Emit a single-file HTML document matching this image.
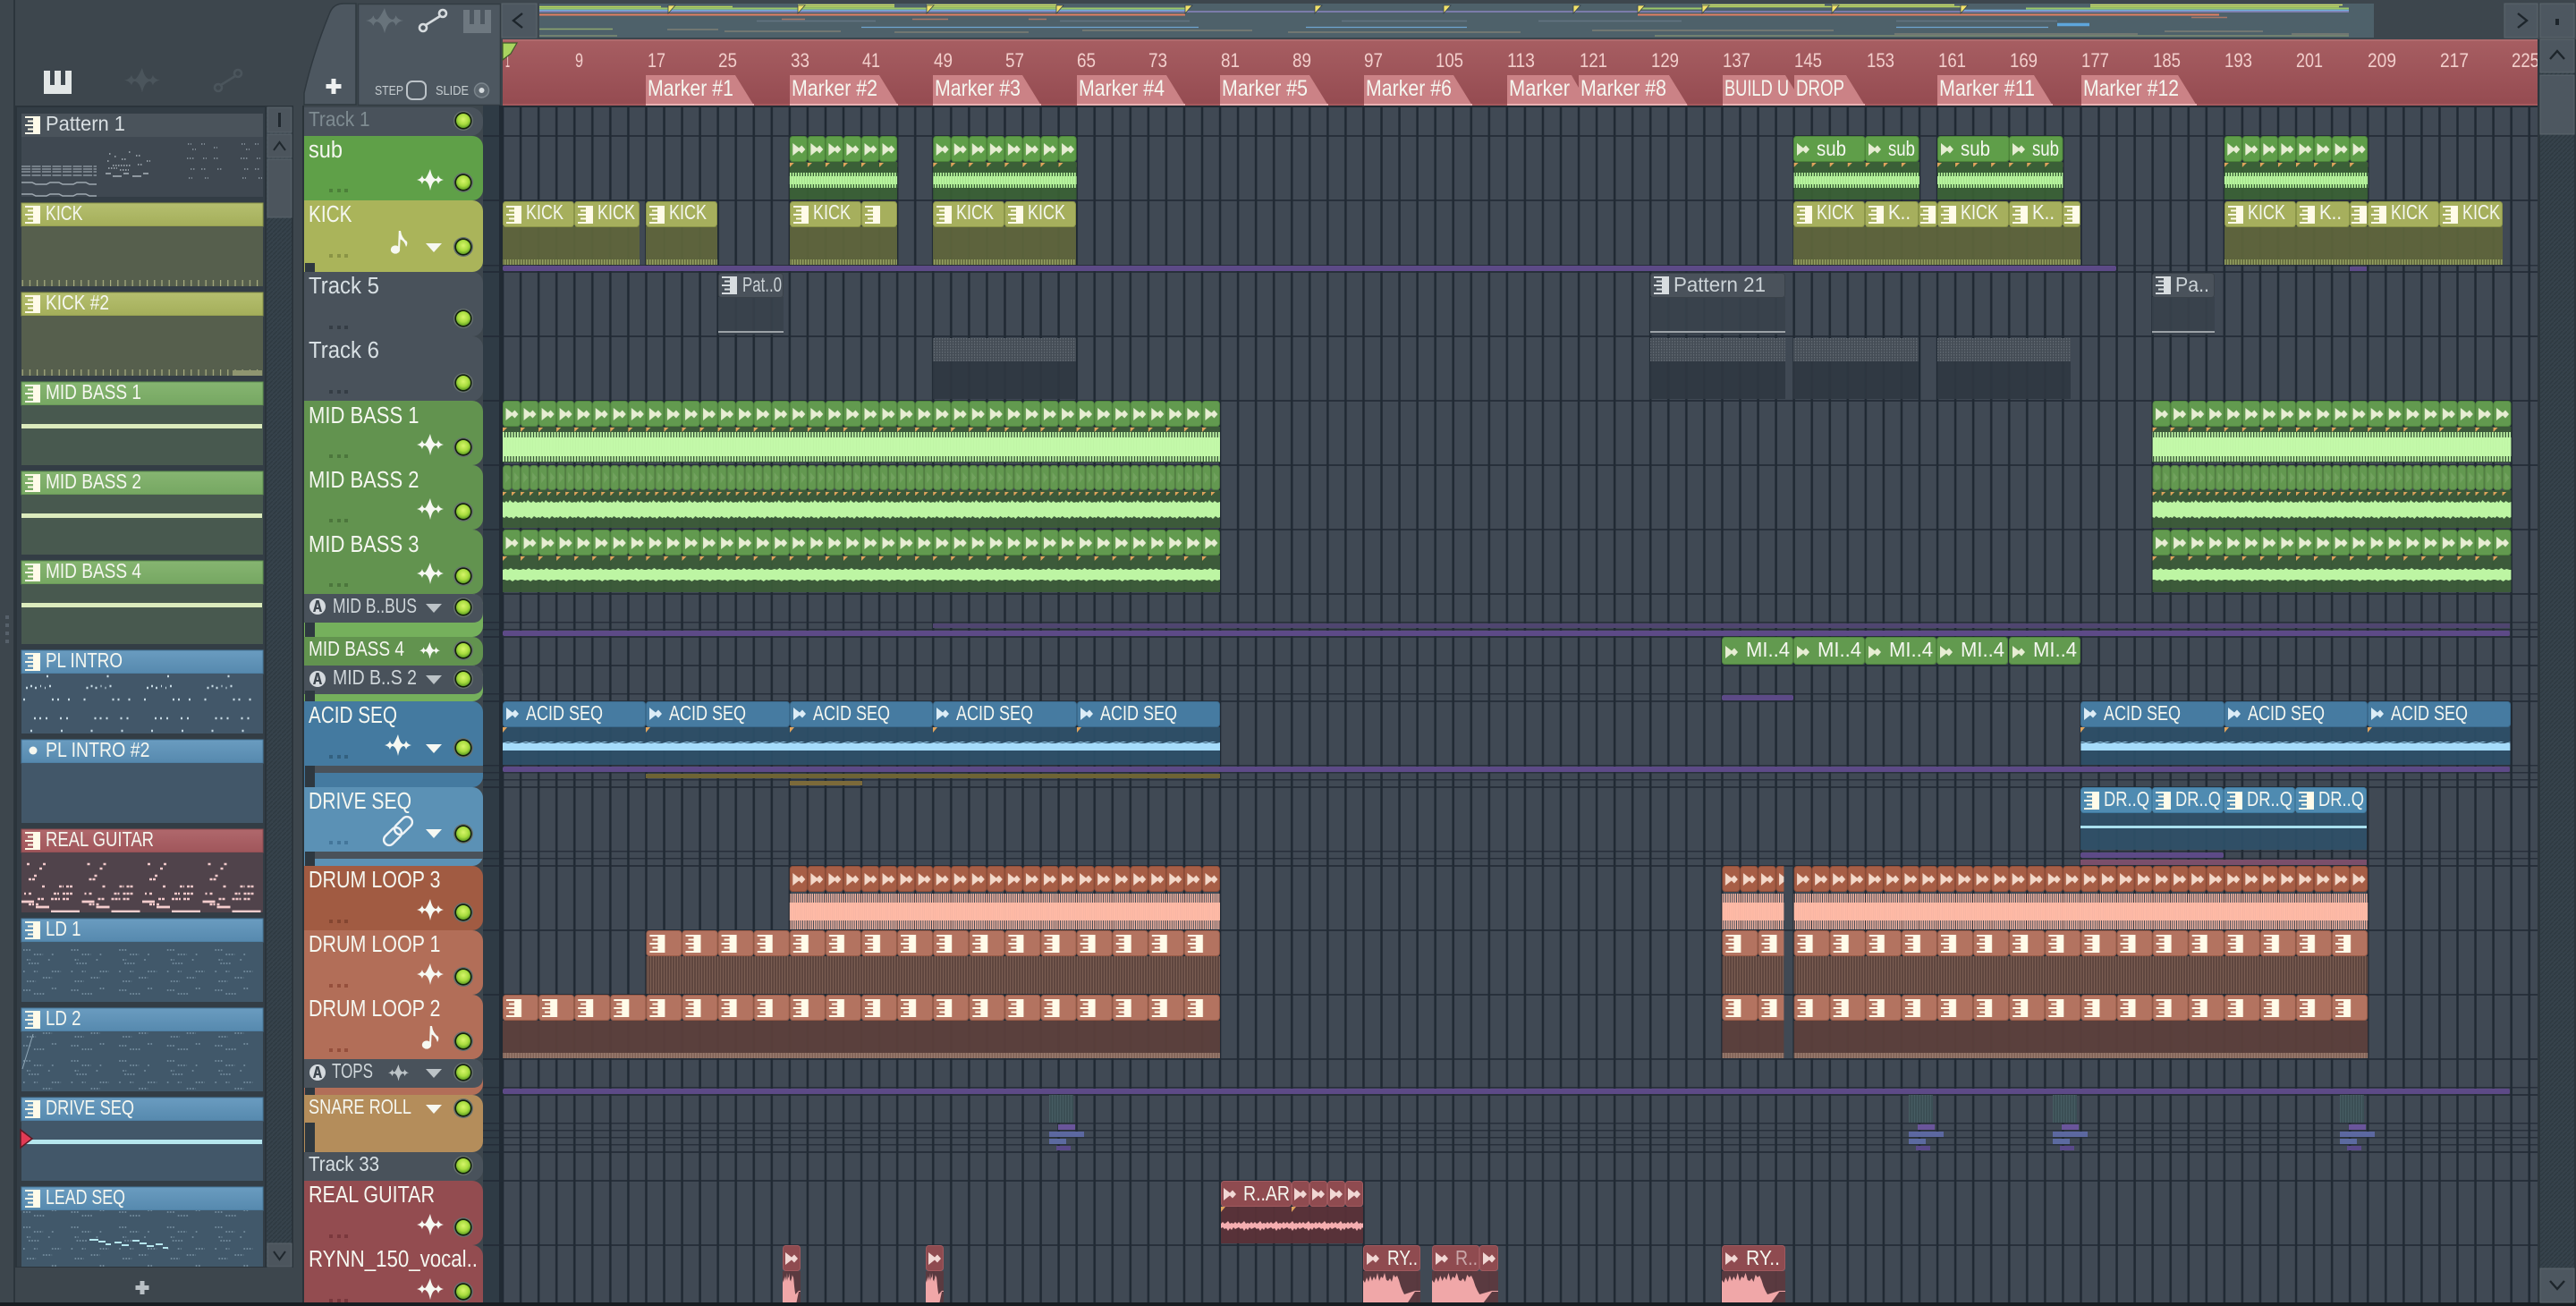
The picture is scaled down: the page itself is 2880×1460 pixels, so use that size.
<!DOCTYPE html>
<html><head><meta charset="utf-8"><title>Playlist</title>
<style>
html,body{margin:0;padding:0;background:#3c454c;width:2880px;height:1460px;overflow:hidden}
svg{display:block}
text{font-family:"Liberation Sans",sans-serif;fill:#f5f7f0;font-size:23px}
.n{font-size:25.5px}.p{font-size:23px}.r{font-size:22px;fill:#f3cfcc}.m{font-size:25px}.s{font-size:14.5px;fill:#c5ccd0}
.kh{fill:#a6af5d;stroke:#8b9549}.gh{fill:#629a4f;stroke:#4f843e}.bh{fill:#467ba1;stroke:#3a6a8d}.dh{fill:#4f8bb1;stroke:#3f7a9f}.rh{fill:#8f4b50;stroke:#a0595e}.sh{fill:#5f9e49;stroke:#4c8439}.th{fill:#4a525b;stroke:#3a424a}
.ic{fill:#fffbe9}.bw{fill:#e6edd2}
</style></head><body>
<svg xmlns="http://www.w3.org/2000/svg" width="2880" height="1460" viewBox="0 0 2880 1460">
<defs>
<path id="bow" d="M0 0L7 5.500 10 2.500 14 7 10 11.500 7 8.500 0 14Z"/>
<path id="pno" d="M0 0H17V20H0V18H9V15.500H3V13.500H9V11H0V9H9V6.500H3V4.500H9V2H0Z"/>
<path id="piano" fill-rule="evenodd" d="M0 0H31V26H0ZM7 0H12V16H7ZM19 0H24V16H19Z"/>
<path id="wav" d="M0,12 Q5,11 6,7 Q7,11 9,11 Q11,10 15,0 Q17,10 21,11 Q23,11 24,7 Q25,11 30,12 Q25,13 24,17 Q23,13 21,13 Q17,14 15,24 Q13,14 9,13 Q7,13 6,17 Q5,13 0,12Z"/>
<path id="tri" d="M0 0H18L9 10Z"/>
<path id="voc" d="M0 1443V1431l2 3 2-6 2 5 2-7 2 6 2-5 2 4 2-8 2 9 2-5 2 2 2-6 2 8 2 1 2-3 2 4 2-8 2 3 2-2 2 5 2 7 2 5 2 4L58 1443H64V1444H58L50 1456H0Z"/>
<g id="lnk" fill="none" stroke-width="2.600"><circle cx="5" cy="21" r="4"/><circle cx="27" cy="5" r="4"/><path d="M8 18L24 8"/></g>
<radialGradient id="lg" cx=".5" cy=".4" r=".6"><stop offset="0" stop-color="#d6f56a"/><stop offset=".6" stop-color="#a8dc3e"/><stop offset="1" stop-color="#5f9f22"/></radialGradient>
<g id="led"><circle r="11" fill="#66706f"/><circle r="9.600" fill="#12200c"/><circle r="8" fill="url(#lg)"/></g>
<g id="aa"><circle r="9" fill="#d5dade"/><path d="M-5 6L-1.500-7H1.500L5 6H2.500L1.600 3H-1.600L-2.500 6ZM-1 1H1L0-4Z" fill="#3c454d"/></g>
<g id="dots"><rect width="4" height="4"/><rect x="9" width="4" height="4"/><rect x="17" width="4" height="4"/></g>
<g id="note"><ellipse cx="5" cy="21" rx="5.200" ry="4.600"/><path d="M8 21L8.800 0H11Q12 8 18 12Q19 15 17 18Q15 11 10.600 9.500L10 21Z"/></g>
<g id="sn"><rect x="0" y="1224" width="27" height="31" fill="url(#snp)"/><rect x="10" y="1257" width="19" height="6" fill="#6a559b"/><rect y="1265" width="39" height="6" fill="#5c68a0"/><rect y="1273" width="19" height="6" fill="#5c6aa0"/><rect x="8" y="1281" width="16" height="5" fill="#5a4a8a"/></g>
<linearGradient id="rul" x1="0" y1="0" x2="0" y2="1"><stop offset="0" stop-color="#a75e62"/><stop offset="1" stop-color="#954b51"/></linearGradient>
<linearGradient id="hk" x1="0" y1="0" x2="0" y2="1"><stop offset="0" stop-color="#b5bf6f"/><stop offset="1" stop-color="#a4ae5a"/></linearGradient>
<linearGradient id="hg" x1="0" y1="0" x2="0" y2="1"><stop offset="0" stop-color="#86b571"/><stop offset="1" stop-color="#76a762"/></linearGradient>
<linearGradient id="hb" x1="0" y1="0" x2="0" y2="1"><stop offset="0" stop-color="#6a9cc0"/><stop offset="1" stop-color="#5689ae"/></linearGradient>
<linearGradient id="hr" x1="0" y1="0" x2="0" y2="1"><stop offset="0" stop-color="#b0686c"/><stop offset="1" stop-color="#a0565b"/></linearGradient>
<pattern id="grid" x="562" y="0" width="20.05" height="4" patternUnits="userSpaceOnUse"><rect width="20.05" height="4" fill="#404954"/><rect width="1.300" height="4" fill="#202933"/><rect x="18.850" width="1.200" height="4" fill="#202933"/></pattern>
<pattern id="hatch" width="5" height="5" patternUnits="userSpaceOnUse"><rect width="5" height="5" fill="#36424b"/><path d="M0 5L5 0" stroke="#2e3941" stroke-width="1.400"/></pattern>
<pattern id="snp" width="3" height="4" patternUnits="userSpaceOnUse"><rect width="3" height="4" fill="#3b4f55"/><rect width="1" height="4" fill="#465c62"/></pattern>
<pattern id="h20s" width="20.05" height="29" patternUnits="userSpaceOnUse"><rect x=".5" y=".5" width="19" height="28" rx="3" class="sh"/><use href="#bow" x="3.500" y="8" class="bw"/></pattern>
<pattern id="h20g" width="20.05" height="29" patternUnits="userSpaceOnUse"><rect x=".5" y=".5" width="19" height="28" rx="3" class="gh"/><use href="#bow" x="3.500" y="8" class="bw"/></pattern>
<pattern id="h10g" width="10.025" height="28" patternUnits="userSpaceOnUse"><rect x=".5" y=".5" width="9" height="27" rx="3" fill="#639850" stroke="#527f42"/><path d="M3 8L8 14 3 20Z" fill="#72a25f"/></pattern>
<pattern id="h20d" width="20.05" height="29" patternUnits="userSpaceOnUse"><rect x=".5" y=".5" width="19" height="28" rx="3" fill="#a75e46" stroke="#8e4d38"/><use href="#bow" x="3.500" y="8" fill="#f3d8c9"/></pattern>
<pattern id="h40d" width="40.1" height="29" patternUnits="userSpaceOnUse"><rect x=".5" y=".5" width="39" height="28" rx="3" fill="#b37360" stroke="#9a5c48"/><use href="#pno" x="4" y="5" class="ic"/></pattern>
<pattern id="f20" width="20.05" height="5" patternUnits="userSpaceOnUse"><path d="M0 0H5L0 5Z" fill="#e0a35c"/></pattern>
<pattern id="f10" width="10.025" height="5" patternUnits="userSpaceOnUse"><path d="M0 0H4.500L0 4.500Z" fill="#e0a35c"/></pattern>
<pattern id="wsub" width="3" height="17" patternUnits="userSpaceOnUse"><rect width="1.700" height="17" fill="#b6f49c"/><rect x="1.700" y="4" width="1.300" height="9" fill="#b6f49c"/></pattern>
<pattern id="wm1" width="3.200" height="33" patternUnits="userSpaceOnUse"><rect width="1.800" height="33" fill="#c3f9a9"/><rect x="1.800" y="6" width="1.400" height="21" fill="#c3f9a9"/></pattern>
<pattern id="wm2" width="20.05" height="21" patternUnits="userSpaceOnUse"><path d="M0 2L2 3 4 1 6 3 8 0 10 2 12 3 14 1 17 3 20.05 2V19L18 20 15 18 12 21 10 19 7 20 4 18 2 20 0 19Z" fill="#bdf5a3"/></pattern>
<pattern id="wm3" width="20.05" height="15" patternUnits="userSpaceOnUse"><path d="M0 2L3 1 6 2 9 0 12 2 15 1 18 2 20.05 2V13L17 14 14 13 11 15 8 13 5 14 2 13 0 13Z" fill="#bdf5a3"/></pattern>
<pattern id="wac" width="20" height="10" patternUnits="userSpaceOnUse"><path d="M0 1L4 0 8 1 12 0 16 1 20 1V9L16 10 12 9 8 10 4 9 0 9Z" fill="#a6dcfb"/></pattern>
<pattern id="wrg" width="18" height="11" patternUnits="userSpaceOnUse"><path d="M0 3L2 1 4 3 6 2 8 0 10 3 12 2 14 3 16 1 18 3V8L16 9 14 7 12 10 10 8 8 11 6 8 4 9 2 7 0 8Z" fill="#f5aeb0"/></pattern>
<pattern id="wd3" width="2.400" height="40" patternUnits="userSpaceOnUse"><rect width="1.400" height="40" fill="#ffbaa6"/><rect x="1.400" y="10" width="1" height="20" fill="#ffbaa6"/></pattern>
<pattern id="bd1" width="3" height="4" patternUnits="userSpaceOnUse"><rect width="3" height="4" fill="#5f463f"/><rect width="1" height="4" fill="#7a5d52"/></pattern>
<pattern id="tk" width="3" height="6" patternUnits="userSpaceOnUse"><rect width="3" height="6" fill="#5f663c"/><rect width="1.500" height="6" fill="#939f60"/></pattern>
<pattern id="td" width="3" height="6" patternUnits="userSpaceOnUse"><rect width="3" height="6" fill="#7f6156"/><rect width="1.500" height="6" fill="#97796c"/></pattern>
<pattern id="t6" width="3" height="3" patternUnits="userSpaceOnUse"><rect width="3" height="3" fill="#454d56"/><rect width="1.200" height="1.600" fill="#636b73"/></pattern>
<pattern id="kt" width="8.200" height="7" patternUnits="userSpaceOnUse"><rect x="0" width="1.200" height="7" fill="#a9ae80"/></pattern>
<pattern id="pi" x="24" y="752" width="67.5" height="68" patternUnits="userSpaceOnUse"><path d="M28 4h2M5 17h2M10 15h2M15 17h2M21 15h1M26 17h1M31 15h2M2 30h2M34 30h2M40 30h2M52 30h2M14 51h2M20 51h2M27 51h2M43 51h2M50 51h2M10 65h2M44 65h2" stroke="#c5d8e2" stroke-width="2.400"/></pattern>
<pattern id="pg" x="24" y="953" width="67.5" height="67" patternUnits="userSpaceOnUse"><path d="M6 13h4M24 13h4M14 26h4M20 18h3M8 30h8M23 38h4M42 38h5M50 38h8M3 46h2M8 46h3M36 46h6M46 46h11M18 52h8M33 52h10M46 52h8M8 58h6M16 58h4" stroke="#f1c8c9" stroke-width="2.400" stroke-dasharray="3 1"/><path d="M0 55h14M16 61h15M33 66h32" stroke="#f4cdcd" stroke-width="2.800"/></pattern>
<pattern id="pl" x="24" y="1053" width="53.6" height="62" patternUnits="userSpaceOnUse"><path d="M2 9h8M14 14h10M30 20h2M6 20h4M34 14h2M8 24h12M34 33h10M2 33h3M14 33h4M24 40h10M6 44h10M2 54h8M14 58h12M34 52h6" stroke="#7f98a9" stroke-width="1.600" stroke-dasharray="1.600 1.600"/></pattern>
<pattern id="p1a" x="24" y="184" width="84" height="36" patternUnits="userSpaceOnUse"><path d="M0 2H84M0 5H84M0 8H84M0 12H84" stroke="#98a2aa" stroke-width="1.200" stroke-dasharray="10 1.500"/><path d="M0 20H12L16 22H28L32 20H42L46 22H58L62 20H72L76 22H84M0 33H12L16 35H28L32 33H42L46 35H58L62 33H72L76 35H84" stroke="#9ea8b0" stroke-width="1.400" fill="none"/></pattern>
<pattern id="p1b" x="118" y="160" width="90" height="60" patternUnits="userSpaceOnUse"><path d="M4 12h2M10 15h2M18 18h5M2 20h3M26 10h3M34 14h6M46 20h4M8 25h20M3 28h10M36 24h5M16 30h10" stroke="#aab3ba" stroke-width="1.500" stroke-dasharray="1.500 1.500"/><path d="M0 34h6M8 37h10M20 34h6M30 37h10M42 34h6" stroke="#aab3ba" stroke-width="1.600"/></pattern>
<pattern id="p1c" x="205" y="155" width="60" height="50" patternUnits="userSpaceOnUse"><path d="M5 6h4M20 6h4M10 12h4M34 10h4M4 22h8M22 22h4M34 22h6M8 34h6M20 34h6M38 34h5M6 44h4M24 44h4" stroke="#8e99a2" stroke-width="1.400" stroke-dasharray="1.400 1.600"/></pattern>
<clipPath id="cl"><rect x="340" y="118" width="205" height="1338"/></clipPath>
<clipPath id="cg"><rect x="562" y="120" width="2275" height="1336"/></clipPath>
<clipPath id="cr"><rect x="562" y="44" width="2275" height="76"/></clipPath>
</defs>

<!-- page base -->
<rect width="2880" height="1460" fill="#3d464d"/>
<rect y="1456" width="2880" height="4" fill="#181d22"/>
<rect x="15" width="2" height="1456" fill="#2c353c"/>
<rect x="338" y="118" width="2" height="1338" fill="#2a3339"/>
<g fill="#56606a"><rect x="6" y="688" width="4" height="4"/><rect x="6" y="697" width="4" height="4"/><rect x="6" y="706" width="4" height="4"/><rect x="6" y="715" width="4" height="4"/></g>

<!-- picker top icons -->
<use href="#piano" x="49" y="79" fill="#e2e6e6"/>
<use href="#wav" transform="translate(139,76) scale(1.33,1.14)" fill="#4b555c"/>
<use href="#lnk" transform="translate(239,77)" stroke="#4b555c"/>

<!-- picker panel -->
<rect x="17" y="118" width="311" height="1299" fill="#2b343b"/>
<rect x="19" y="120" width="277" height="1296" fill="#333d45"/>
<rect x="298" y="120" width="28" height="1296" fill="url(#hatch)"/>
<rect x="299" y="120" width="27" height="28" fill="#4c555d" stroke="#5a646b"/>
<rect x="311" y="126" width="3" height="16" fill="#20282e"/>
<rect x="299" y="150" width="27" height="26" fill="#4c555d" stroke="#5a646b"/>
<path d="M306 168L312.500 159 319 168" fill="none" stroke="#20282e" stroke-width="2"/>
<rect x="299" y="178" width="27" height="65" fill="#4c555d" stroke="#58626a"/>
<rect x="299" y="1390" width="27" height="26" fill="#4c555d" stroke="#5a646b"/>
<path d="M306 1399L312.500 1408 319 1399" fill="none" stroke="#20282e" stroke-width="2"/>

<!-- picker items -->
<rect x="24" y="127" width="270" height="26" fill="#4a535b"/><rect x="24" y="153" width="270" height="67" fill="#3f4851"/>
<rect x="24" y="184" width="84" height="36" fill="url(#p1a)"/><rect x="118" y="160" width="90" height="60" fill="url(#p1b)"/><rect x="205" y="155" width="89" height="50" fill="url(#p1c)"/>
<rect x="24" y="227" width="270" height="26" fill="url(#hk)" stroke="#8b9549"/><rect x="24" y="253" width="270" height="67" fill="#565f4d"/><rect x="24" y="313" width="270" height="7" fill="url(#kt)"/>
<rect x="24" y="327" width="270" height="26" fill="url(#hk)" stroke="#8b9549"/><rect x="24" y="353" width="270" height="67" fill="#565f4d"/><rect x="24" y="413" width="270" height="7" fill="url(#kt)"/><rect x="260" y="414" width="33" height="6" fill="#8f9570"/>
<rect x="24" y="427" width="270" height="26" fill="url(#hg)" stroke="#5f9150"/><rect x="24" y="453" width="270" height="67" fill="#48594f"/><rect x="24" y="474" width="269" height="5" fill="#dcebbd"/>
<rect x="24" y="527" width="270" height="26" fill="url(#hg)" stroke="#5f9150"/><rect x="24" y="553" width="270" height="67" fill="#48594f"/><rect x="24" y="574" width="269" height="5" fill="#dcebbd"/>
<rect x="24" y="627" width="270" height="26" fill="url(#hg)" stroke="#5f9150"/><rect x="24" y="653" width="270" height="67" fill="#48594f"/><rect x="24" y="674" width="269" height="5" fill="#dcebbd"/>
<rect x="24" y="727" width="270" height="26" fill="url(#hb)" stroke="#47789c"/><rect x="24" y="753" width="270" height="67" fill="#425769"/><rect x="24" y="753" width="270" height="67" fill="url(#pi)"/>
<rect x="24" y="827" width="270" height="26" fill="url(#hb)" stroke="#47789c"/><rect x="24" y="853" width="270" height="67" fill="#425769"/>
<rect x="24" y="927" width="270" height="26" fill="url(#hr)" stroke="#8c4a50"/><rect x="24" y="953" width="270" height="67" fill="#50434b"/><rect x="24" y="953" width="270" height="67" fill="url(#pg)"/>
<rect x="24" y="1027" width="270" height="26" fill="url(#hb)" stroke="#47789c"/><rect x="24" y="1053" width="270" height="67" fill="#41586a"/><rect x="24" y="1053" width="270" height="67" fill="url(#pl)"/>
<rect x="24" y="1127" width="270" height="26" fill="url(#hb)" stroke="#47789c"/><rect x="24" y="1153" width="270" height="67" fill="#41586a"/><rect x="24" y="1153" width="270" height="67" fill="url(#pl)"/>
<path d="M37 1156L25 1195" stroke="#8fa6b6" stroke-width="1"/>
<rect x="24" y="1227" width="270" height="26" fill="url(#hb)" stroke="#47789c"/><rect x="24" y="1253" width="270" height="67" fill="#425769"/><rect x="24" y="1274" width="269" height="5" fill="#b6e6ee"/>
<path d="M23 1263L36 1273 23 1283Z" fill="#e23b55" stroke="#5c1a24" stroke-width="1.500"/>
<rect x="24" y="1327" width="270" height="26" fill="url(#hb)" stroke="#47789c"/><rect x="24" y="1353" width="270" height="63" fill="#41586a"/><rect x="24" y="1353" width="270" height="63" fill="url(#pl)"/>
<path d="M100 1386h10M110 1388h8M118 1391h6M128 1389h8M136 1392h8M148 1387h8M156 1390h8M164 1393h8M174 1391h8M182 1395h6" stroke="#b6e6ee" stroke-width="2"/>
<g class="ic">
<use href="#pno" x="28" y="130"/><use href="#pno" x="28" y="230"/><use href="#pno" x="28" y="330"/><use href="#pno" x="28" y="430"/><use href="#pno" x="28" y="530"/><use href="#pno" x="28" y="630"/><use href="#pno" x="28" y="730"/><use href="#pno" x="28" y="930"/><use href="#pno" x="28" y="1030"/><use href="#pno" x="28" y="1130"/><use href="#pno" x="28" y="1230"/><use href="#pno" x="28" y="1330"/>
</g>
<circle cx="37" cy="839" r="4.500" fill="#f5f7f0"/>
<text class="p" x="51" y="146" textLength="89" lengthAdjust="spacingAndGlyphs" style="fill:#d9dfe2">Pattern 1</text>
<text class="p" x="51" y="246" textLength="41.500" lengthAdjust="spacingAndGlyphs">KICK</text>
<text class="p" x="51" y="346" textLength="71" lengthAdjust="spacingAndGlyphs">KICK #2</text>
<text class="p" x="51" y="446" textLength="107" lengthAdjust="spacingAndGlyphs">MID BASS 1</text>
<text class="p" x="51" y="546" textLength="107" lengthAdjust="spacingAndGlyphs">MID BASS 2</text>
<text class="p" x="51" y="646" textLength="107" lengthAdjust="spacingAndGlyphs">MID BASS 4</text>
<text class="p" x="51" y="746" textLength="86" lengthAdjust="spacingAndGlyphs">PL INTRO</text>
<text class="p" x="51" y="846" textLength="116.500" lengthAdjust="spacingAndGlyphs">PL INTRO #2</text>
<text class="p" x="51" y="946" textLength="121" lengthAdjust="spacingAndGlyphs">REAL GUITAR</text>
<text class="p" x="51" y="1046" textLength="39.500" lengthAdjust="spacingAndGlyphs">LD 1</text>
<text class="p" x="51" y="1146" textLength="39.500" lengthAdjust="spacingAndGlyphs">LD 2</text>
<text class="p" x="51" y="1246" textLength="99" lengthAdjust="spacingAndGlyphs">DRIVE SEQ</text>
<text class="p" x="51" y="1346" textLength="89" lengthAdjust="spacingAndGlyphs">LEAD SEQ</text>
<path d="M159 1432V1447M151.500 1439.500H166.500" stroke="#b9c0c5" stroke-width="5"/>

<!-- tabs above track list -->
<path d="M340 117V104Q350 60 368 16Q372 4 384 4H398V117Z" fill="#4d5760" stroke="#2f383f" stroke-width="1.500"/>
<path d="M373 88V105M364.500 96.500H381.500" stroke="#eef0f0" stroke-width="5"/>
<rect x="400.500" y="4.500" width="159" height="113" fill="#4d5760" stroke="#333c43" stroke-width="1.500"/>
<use href="#wav" transform="translate(409,9) scale(1.4,1.17)" fill="#68737b"/>
<use href="#lnk" transform="translate(468,10)" stroke="#d7dcdf"/>
<use href="#piano" x="518" y="11" fill="#6e7880"/>
<text class="s" x="419" y="106" textLength="32" lengthAdjust="spacingAndGlyphs">STEP</text>
<rect x="455" y="91" width="21" height="20" rx="6" fill="none" stroke="#bcc3c8" stroke-width="2"/>
<text class="s" x="487" y="106" textLength="37" lengthAdjust="spacingAndGlyphs">SLIDE</text>
<circle cx="538.500" cy="101" r="8" fill="#5d676f" stroke="#7b858c" stroke-width="1.500"/><circle cx="538.500" cy="101" r="3" fill="#d5dadd"/>

<!-- column beside tracks -->
<rect x="540" y="118" width="22" height="1338" fill="#2f3b45"/>
<rect x="558" y="118" width="4" height="1338" fill="#212a33"/>

<!-- tracks -->
<g clip-path="url(#cl)">
<rect x="300" y="120" width="240" height="32" rx="14" fill="#49525b"/>
<rect x="300" y="152" width="240" height="72" rx="12" fill="#5fa048"/>
<rect x="300" y="224" width="240" height="80" rx="12" fill="#aab45a"/>
<rect x="300" y="304" width="240" height="72" rx="12" fill="#49525b"/>
<rect x="300" y="376" width="240" height="72" rx="12" fill="#49525b"/>
<rect x="300" y="448" width="240" height="72" rx="12" fill="#62934f"/>
<rect x="300" y="520" width="240" height="72" rx="12" fill="#62934f"/>
<rect x="300" y="592" width="240" height="72" rx="12" fill="#62934f"/>
<rect x="300" y="664" width="240" height="48" rx="12" fill="#75b05c"/><path d="M300 664H528Q540 664 540 676V684Q540 696 528 696H300Z" fill="#49525b"/>
<rect x="300" y="712" width="240" height="32" rx="12" fill="#62934f"/>
<rect x="300" y="744" width="240" height="40" rx="12" fill="#75b05c"/><path d="M300 744H528Q540 744 540 756V764Q540 776 528 776H300Z" fill="#49525b"/>
<rect x="300" y="784" width="240" height="96" rx="12" fill="#447aa0"/><rect x="351" y="856" width="189" height="8" fill="#4a525a"/>
<rect x="300" y="880" width="240" height="88" rx="12" fill="#5b91b5"/><rect x="351" y="952" width="189" height="8" fill="#4a525a"/>
<rect x="300" y="968" width="240" height="72" rx="12" fill="#a15b42"/>
<rect x="300" y="1040" width="240" height="72" rx="12" fill="#b26e58"/>
<rect x="300" y="1112" width="240" height="72" rx="12" fill="#b26e58"/>
<rect x="300" y="1184" width="240" height="40" rx="12" fill="#b26e58"/><path d="M300 1184H528Q540 1184 540 1196V1204Q540 1216 528 1216H300Z" fill="#49525b"/>
<rect x="300" y="1224" width="240" height="64" rx="12" fill="#b48d5b"/>
<rect x="300" y="1288" width="240" height="32" rx="12" fill="#49525b"/>
<rect x="300" y="1320" width="240" height="72" rx="12" fill="#934c50"/>
<rect x="300" y="1392" width="240" height="76" rx="12" fill="#934c50"/>
</g>
<!-- collapse notches -->
<g fill="#2e3840">
<rect x="341" y="294" width="11" height="10"/><rect x="341" y="696" width="11" height="16"/><rect x="341" y="772" width="11" height="12"/><rect x="341" y="856" width="11" height="24"/><rect x="341" y="952" width="11" height="16"/><rect x="341" y="1216" width="11" height="8"/><rect x="341" y="1255" width="11" height="33"/>
</g>
<!-- track names -->
<text class="n" x="345" y="141" textLength="68.500" lengthAdjust="spacingAndGlyphs" style="fill:#7f8c92;font-size:23px">Track 1</text>
<text class="n" x="345" y="176" textLength="38" lengthAdjust="spacingAndGlyphs">sub</text>
<text class="n" x="345" y="248" textLength="48.500" lengthAdjust="spacingAndGlyphs">KICK</text>
<text class="n" x="345" y="328" textLength="79" lengthAdjust="spacingAndGlyphs" style="fill:#d8e0e4">Track 5</text>
<text class="n" x="345" y="400" textLength="79" lengthAdjust="spacingAndGlyphs" style="fill:#d8e0e4">Track 6</text>
<text class="n" x="345" y="473" textLength="123.500" lengthAdjust="spacingAndGlyphs">MID BASS 1</text>
<text class="n" x="345" y="545" textLength="123.500" lengthAdjust="spacingAndGlyphs">MID BASS 2</text>
<text class="n" x="345" y="617" textLength="123.500" lengthAdjust="spacingAndGlyphs">MID BASS 3</text>
<text x="372" y="685" textLength="94" lengthAdjust="spacingAndGlyphs" style="fill:#cfd6da">MID B..BUS</text>
<text x="345" y="733" textLength="107" lengthAdjust="spacingAndGlyphs">MID BASS 4</text>
<text x="372" y="765" textLength="94" lengthAdjust="spacingAndGlyphs" style="fill:#cfd6da">MID B..S 2</text>
<text class="n" x="345" y="808" textLength="99" lengthAdjust="spacingAndGlyphs">ACID SEQ</text>
<text class="n" x="345" y="904" textLength="115" lengthAdjust="spacingAndGlyphs">DRIVE SEQ</text>
<text class="n" x="345" y="992" textLength="147.500" lengthAdjust="spacingAndGlyphs">DRUM LOOP 3</text>
<text class="n" x="345" y="1064" textLength="147.500" lengthAdjust="spacingAndGlyphs">DRUM LOOP 1</text>
<text class="n" x="345" y="1136" textLength="147.500" lengthAdjust="spacingAndGlyphs">DRUM LOOP 2</text>
<text x="371" y="1205" textLength="46" lengthAdjust="spacingAndGlyphs" style="fill:#cfd6da">TOPS</text>
<text x="345" y="1245" textLength="115" lengthAdjust="spacingAndGlyphs">SNARE ROLL</text>
<text x="345" y="1309" textLength="79" lengthAdjust="spacingAndGlyphs" style="fill:#d8e0e4">Track 33</text>
<text class="n" x="345" y="1344" textLength="141" lengthAdjust="spacingAndGlyphs">REAL GUITAR</text>
<text class="n" x="345" y="1416" textLength="189" lengthAdjust="spacingAndGlyphs">RYNN_150_vocal..</text>
<!-- track dots -->
<use href="#dots" x="368" y="211" fill="#4c8039"/><use href="#dots" x="368" y="284" fill="#8a9445"/><use href="#dots" x="368" y="364" fill="#353d45"/><use href="#dots" x="368" y="436" fill="#353d45"/><use href="#dots" x="368" y="508" fill="#4c763c"/><use href="#dots" x="368" y="580" fill="#4c763c"/><use href="#dots" x="368" y="652" fill="#4c763c"/><use href="#dots" x="368" y="844" fill="#33607f"/><use href="#dots" x="368" y="940" fill="#44769a"/><use href="#dots" x="368" y="1028" fill="#844631"/><use href="#dots" x="368" y="1100" fill="#954f3c"/><use href="#dots" x="368" y="1172" fill="#954f3c"/><use href="#dots" x="368" y="1380" fill="#7a383d"/><use href="#dots" x="368" y="1452" fill="#7a383d"/>
<!-- track icons -->
<g fill="#f6f8f2">
<use href="#wav" transform="translate(466,189)"/><use href="#wav" transform="translate(466,485)"/><use href="#wav" transform="translate(466,557)"/><use href="#wav" transform="translate(466,629)"/>
<use href="#wav" transform="translate(430,821)"/><use href="#wav" transform="translate(466,1005)"/><use href="#wav" transform="translate(466,1077)"/><use href="#wav" transform="translate(466,1357)"/><use href="#wav" transform="translate(466,1429)"/>
<use href="#wav" transform="translate(469,718) scale(.77)"/>
<use href="#note" transform="translate(437,258)"/><use href="#note" transform="translate(472,1147)"/>
<use href="#tri" x="476" y="272"/><use href="#tri" x="476" y="832"/><use href="#tri" x="476" y="927"/><use href="#tri" x="476" y="1235"/>
</g>
<g fill="#bcc3c7"><use href="#tri" x="476" y="675"/><use href="#tri" x="476" y="755"/><use href="#tri" x="476" y="1195"/><use href="#wav" transform="translate(434,1190) scale(.77)"/></g>
<g transform="translate(445,929) rotate(-45)" fill="none" stroke="#eef3f6" stroke-width="2.400"><rect x="-20" y="-6" width="23" height="12" rx="6"/><rect x="-3" y="-6" width="23" height="12" rx="6"/></g>
<use href="#aa" x="355" y="678"/><use href="#aa" x="355" y="759"/><use href="#aa" x="355" y="1199"/>
<!-- LEDs -->
<use href="#led" x="518" y="135"/><use href="#led" x="518" y="204"/><use href="#led" x="518" y="276"/><use href="#led" x="518" y="356"/><use href="#led" x="518" y="428"/><use href="#led" x="518" y="500"/><use href="#led" x="518" y="572"/><use href="#led" x="518" y="644"/><use href="#led" x="518" y="679"/><use href="#led" x="518" y="727"/><use href="#led" x="518" y="759"/><use href="#led" x="518" y="836"/><use href="#led" x="518" y="932"/><use href="#led" x="518" y="1020"/><use href="#led" x="518" y="1092"/><use href="#led" x="518" y="1164"/><use href="#led" x="518" y="1199"/><use href="#led" x="518" y="1239"/><use href="#led" x="518" y="1303"/><use href="#led" x="518" y="1372"/><use href="#led" x="518" y="1444"/>

<!-- top bar: overview -->
<rect x="561" y="4" width="39" height="38" fill="#4d5760" stroke="#5c666d"/>
<path d="M584 15L574 23 584 31" fill="none" stroke="#1d252b" stroke-width="2.400"/>
<rect x="603" y="4" width="2051" height="38" fill="#4e616a"/>
<g fill="none" stroke-width="1.400">
<path d="M892 5.500H1000M1036 5.500H1181M1903 5.500H2040M2048 5.500H2185M2337 5.500H2619" stroke="#d4e66a"/>
<path d="M603 7.500H739M747 7.500H819M892 7.500H1000M1036 7.500H1181M1903 7.500H2192M2337 7.500H2615" stroke="#b9d85e"/>
<path d="M603 9.500H1325M2265 9.500H2626M1831 9.500H1903" stroke="#9cc868" stroke-width="2"/>
<path d="M603 11.500H1325M2192 11.500H2626" stroke="#72b0dc"/>
<path d="M603 13H2626" stroke="#8a86c0"/>
<path d="M603 16.500H1325M1831 16.500H2481" stroke="#e07e62" stroke-width="2"/>
<path d="M846 23.500H979M1185 23.500H1330M1500 23.500H1640M1720 23.500H1880M2120 23.500H2300" stroke="#637483"/>
<path d="M874 21.500H900M1020 21.500H1060M1150 21.500H1170M2450 19.500H2490" stroke="#a87868"/>
<path d="M603 32.500H685" stroke="#8fa86f"/>
<path d="M963 30.500H1340M1460 30.500H1640M2120 30.500H2290" stroke="#6fa4d0" stroke-width="1.200"/>
<path d="M2300 27.500H2336" stroke="#5ea6dc" stroke-width="3.500"/>
<path d="M746 33H803M810 35H940M1000 36H1150M1210 34H1400M1440 36H1700M1780 34H2050M2118 38H2390M2420 35H2530M2562 38H2626" stroke="#7d7f74" stroke-width="1.400"/>
<path d="M603 40H690M1850 40H2626" stroke="#7f8c72"/>
</g>
<g fill="#f1e26a" stroke="#39424a" stroke-width=".8"><path d="M747 6V15L755 6Z"/><path d="M892 6V15L900 6Z"/><path d="M1036 6V15L1044 6Z"/><path d="M1181 6V15L1189 6Z"/><path d="M1325 6V15L1333 6Z"/><path d="M1470 6V15L1478 6Z"/><path d="M1614 6V15L1622 6Z"/><path d="M1759 6V15L1767 6Z"/><path d="M1831 6V15L1839 6Z"/><path d="M1903 6V15L1911 6Z"/><path d="M2048 6V15L2056 6Z"/><path d="M2192 6V15L2200 6Z"/></g>
<rect x="2800" y="4" width="37" height="38" fill="#4d5760" stroke="#5c666d"/>
<path d="M2815 15L2825 23 2815 31" fill="none" stroke="#1d252b" stroke-width="2.400"/>
<rect x="2840" y="4" width="38" height="38" fill="#4d5760" stroke="#5c666d"/>
<rect x="2857" y="21" width="4" height="7" fill="#1d252b"/>

<!-- right scrollbar -->
<rect x="2837" y="44" width="43" height="1412" fill="#2c353c"/>
<rect x="2840" y="44" width="38" height="1412" fill="url(#hatch)"/>
<rect x="2840" y="44" width="38" height="37" fill="#4d5760" stroke="#5c666d"/>
<path d="M2851 66L2859 57 2867 66" fill="none" stroke="#1d252b" stroke-width="2.400"/>
<rect x="2840" y="84" width="38" height="66" fill="#4d5760" stroke="#5c666d"/>
<rect x="2840" y="1418" width="38" height="38" fill="#4d5760" stroke="#5c666d"/>
<path d="M2851 1432L2859 1441 2867 1432" fill="none" stroke="#1d252b" stroke-width="2.400"/>

<!-- ruler -->
<rect x="562" y="44" width="2275" height="74" fill="url(#rul)"/>
<rect x="562" y="44" width="2275" height="2" fill="#b06a6d"/>
<rect x="562" y="116" width="2275" height="2" fill="#a7595d"/>
<rect x="562" y="118" width="2275" height="2" fill="#232b33"/>
<g clip-path="url(#cr)">
<g fill="#cb8286">
<path d="M722 84H822L843 118H722Z"/><path d="M883 84H983L1004 118H883Z"/><path d="M1043 84H1143L1164 118H1043Z"/><path d="M1204 84H1304L1325 118H1204Z"/><path d="M1364 84H1464L1485 118H1364Z"/><path d="M1525 84H1625L1646 118H1525Z"/><path d="M1685 84H1757L1765 98V118H1685Z"/><path d="M1765 84H1866L1887 118H1765Z"/><path d="M1926 84H1996L2006 100V118H1926Z"/><path d="M2006 84H2064L2085 118H2006Z"/><path d="M2166 84H2274L2295 118H2166Z"/><path d="M2327 84H2435L2456 118H2327Z"/>
</g>
<g fill="#eaaeb0"><rect x="722" y="116" width="121" height="2"/><rect x="883" y="116" width="121" height="2"/><rect x="1043" y="116" width="121" height="2"/><rect x="1204" y="116" width="121" height="2"/><rect x="1364" y="116" width="121" height="2"/><rect x="1525" y="116" width="121" height="2"/><rect x="1685" y="116" width="80" height="2"/><rect x="1765" y="116" width="121" height="2"/><rect x="1926" y="116" width="80" height="2"/><rect x="2006" y="116" width="79" height="2"/><rect x="2166" y="116" width="129" height="2"/><rect x="2327" y="116" width="129" height="2"/></g>
<text class="r" x="565" y="75" textLength="5" lengthAdjust="spacingAndGlyphs">1</text>
<text class="r" x="643" y="75" textLength="9" lengthAdjust="spacingAndGlyphs">9</text>
<text class="r" x="724" y="75" textLength="20" lengthAdjust="spacingAndGlyphs">17</text>
<text class="r" x="803" y="75" textLength="21" lengthAdjust="spacingAndGlyphs">25</text>
<text class="r" x="884" y="75" textLength="21" lengthAdjust="spacingAndGlyphs">33</text>
<text class="r" x="964" y="75" textLength="20" lengthAdjust="spacingAndGlyphs">41</text>
<text class="r" x="1044" y="75" textLength="21" lengthAdjust="spacingAndGlyphs">49</text>
<text class="r" x="1124" y="75" textLength="21" lengthAdjust="spacingAndGlyphs">57</text>
<text class="r" x="1204" y="75" textLength="21" lengthAdjust="spacingAndGlyphs">65</text>
<text class="r" x="1284" y="75" textLength="21" lengthAdjust="spacingAndGlyphs">73</text>
<text class="r" x="1365" y="75" textLength="21" lengthAdjust="spacingAndGlyphs">81</text>
<text class="r" x="1445" y="75" textLength="21" lengthAdjust="spacingAndGlyphs">89</text>
<text class="r" x="1525" y="75" textLength="21" lengthAdjust="spacingAndGlyphs">97</text>
<text class="r" x="1605" y="75" textLength="31" lengthAdjust="spacingAndGlyphs">105</text>
<text class="r" x="1685" y="75" textLength="31" lengthAdjust="spacingAndGlyphs">113</text>
<text class="r" x="1766" y="75" textLength="31" lengthAdjust="spacingAndGlyphs">121</text>
<text class="r" x="1846" y="75" textLength="31" lengthAdjust="spacingAndGlyphs">129</text>
<text class="r" x="1926" y="75" textLength="31" lengthAdjust="spacingAndGlyphs">137</text>
<text class="r" x="2006" y="75" textLength="31" lengthAdjust="spacingAndGlyphs">145</text>
<text class="r" x="2087" y="75" textLength="31" lengthAdjust="spacingAndGlyphs">153</text>
<text class="r" x="2167" y="75" textLength="31" lengthAdjust="spacingAndGlyphs">161</text>
<text class="r" x="2247" y="75" textLength="31" lengthAdjust="spacingAndGlyphs">169</text>
<text class="r" x="2327" y="75" textLength="31" lengthAdjust="spacingAndGlyphs">177</text>
<text class="r" x="2407" y="75" textLength="31" lengthAdjust="spacingAndGlyphs">185</text>
<text class="r" x="2487" y="75" textLength="31" lengthAdjust="spacingAndGlyphs">193</text>
<text class="r" x="2567" y="75" textLength="30" lengthAdjust="spacingAndGlyphs">201</text>
<text class="r" x="2647" y="75" textLength="32" lengthAdjust="spacingAndGlyphs">209</text>
<text class="r" x="2728" y="75" textLength="32" lengthAdjust="spacingAndGlyphs">217</text>
<text class="r" x="2808" y="75" textLength="31" lengthAdjust="spacingAndGlyphs">225</text>
<text class="m" x="724" y="107" textLength="96" lengthAdjust="spacingAndGlyphs">Marker #1</text>
<text class="m" x="885" y="107" textLength="96" lengthAdjust="spacingAndGlyphs">Marker #2</text>
<text class="m" x="1045" y="107" textLength="96" lengthAdjust="spacingAndGlyphs">Marker #3</text>
<text class="m" x="1206" y="107" textLength="96" lengthAdjust="spacingAndGlyphs">Marker #4</text>
<text class="m" x="1366" y="107" textLength="96" lengthAdjust="spacingAndGlyphs">Marker #5</text>
<text class="m" x="1527" y="107" textLength="96" lengthAdjust="spacingAndGlyphs">Marker #6</text>
<text class="m" x="1687" y="107" textLength="68" lengthAdjust="spacingAndGlyphs">Marker</text>
<text class="m" x="1767" y="107" textLength="96" lengthAdjust="spacingAndGlyphs">Marker #8</text>
<text class="m" x="1928" y="107" textLength="72" lengthAdjust="spacingAndGlyphs">BUILD U</text>
<text class="m" x="2008" y="107" textLength="54" lengthAdjust="spacingAndGlyphs">DROP</text>
<text class="m" x="2168" y="107" textLength="107" lengthAdjust="spacingAndGlyphs">Marker #11</text>
<text class="m" x="2329" y="107" textLength="107" lengthAdjust="spacingAndGlyphs">Marker #12</text>
</g>
<path d="M562 48H578L571 60 562 67Z" fill="#a9d45f" stroke="#3d5a2a" stroke-width="1.200"/>

<!-- playlist grid -->
<rect x="562" y="120" width="2275" height="1336" fill="url(#grid)"/>
<g fill="#222b34" fill-opacity=".8">
<rect x="540" y="151" width="2297" height="2"/><rect x="540" y="223" width="2297" height="2"/><rect x="540" y="296" width="2297" height="1.500"/><rect x="540" y="303" width="2297" height="2"/><rect x="540" y="375" width="2297" height="2"/><rect x="540" y="447" width="2297" height="2"/><rect x="540" y="519" width="2297" height="2"/><rect x="540" y="591" width="2297" height="2"/><rect x="540" y="663" width="2297" height="2"/><rect x="540" y="695" width="2297" height="1.500"/><rect x="540" y="703" width="2297" height="1.500"/><rect x="540" y="711" width="2297" height="2"/><rect x="540" y="743" width="2297" height="2"/><rect x="540" y="775" width="2297" height="1.500"/><rect x="540" y="783" width="2297" height="2"/><rect x="540" y="855" width="2297" height="1.500"/><rect x="540" y="863" width="2297" height="1.500"/><rect x="540" y="871" width="2297" height="1.500"/><rect x="540" y="879" width="2297" height="2"/><rect x="540" y="951" width="2297" height="1.500"/><rect x="540" y="959" width="2297" height="1.500"/><rect x="540" y="967" width="2297" height="2"/><rect x="540" y="1039" width="2297" height="2"/><rect x="540" y="1111" width="2297" height="2"/><rect x="540" y="1183" width="2297" height="2"/><rect x="540" y="1215" width="2297" height="1.500"/><rect x="540" y="1223" width="2297" height="2"/><rect x="540" y="1255" width="2297" height="1.500"/><rect x="540" y="1263" width="2297" height="1.500"/><rect x="540" y="1271" width="2297" height="1.500"/><rect x="540" y="1279" width="2297" height="1.500"/><rect x="540" y="1287" width="2297" height="2"/><rect x="540" y="1319" width="2297" height="2"/><rect x="540" y="1391" width="2297" height="2"/>
</g>

<g clip-path="url(#cg)">
<!-- purple automation stripes -->
<g fill="#5d4a87">
<rect x="562" y="297" width="1804" height="6" rx="2"/><rect x="2627" y="298" width="19" height="5"/>
<rect x="1043" y="697" width="1763" height="5" fill="#4f4570"/><rect x="562" y="705" width="2244" height="6" rx="2"/>
<rect x="1925" y="777" width="80" height="6" rx="2"/>
<rect x="562" y="857" width="2244" height="6" rx="2"/>
<rect x="2326" y="953" width="160" height="6" rx="2"/>
<rect x="562" y="1217" width="2244" height="6" rx="2"/>
</g>
<rect x="722" y="865" width="642" height="5" fill="#6e6435"/><rect x="883" y="873" width="81" height="5" fill="#7c6a3a"/>
<rect x="2326" y="961" width="320" height="6" fill="#7a4f6b"/>

<!-- sub row -->
<g transform="translate(562,152)">
<rect x="320.800" width="120.300" height="29" fill="url(#h20s)"/><rect x="481.200" width="160.400" height="29" fill="url(#h20s)"/><rect x="1924.800" width="160.400" height="29" fill="url(#h20s)"/>
<g fill="#3a6234" fill-opacity=".9"><rect x="320.800" y="29" width="120.300" height="42"/><rect x="481.200" y="29" width="160.400" height="42"/><rect x="1443.600" y="29" width="140.350" height="42"/><rect x="1604" y="29" width="140.350" height="42"/><rect x="1924.800" y="29" width="160.400" height="42"/></g>
<g fill="url(#f20)"><rect x="320.800" y="30" width="120.300" height="5"/><rect x="481.200" y="30" width="160.400" height="5"/><rect x="1924.800" y="30" width="160.400" height="5"/><rect x="1443.600" y="30" width="140.350" height="5"/><rect x="1604" y="30" width="140.350" height="5"/></g>
</g>
<g transform="translate(562,193)" fill="url(#wsub)"><rect x="320.800" width="120.300" height="17"/><rect x="481.200" width="160.400" height="17"/><rect x="1443.600" width="140.350" height="17"/><rect x="1604" width="140.350" height="17"/><rect x="1924.800" width="160.400" height="17"/></g>
<rect x="2005.500" y="152.500" width="79.500" height="28" rx="3" class="sh"/><rect x="2085.500" y="152.500" width="59.500" height="28" rx="3" class="sh"/><rect x="2166.500" y="152.500" width="79.500" height="28" rx="3" class="sh"/><rect x="2246.500" y="152.500" width="59.500" height="28" rx="3" class="sh"/>
<g class="bw"><use href="#bow" x="2009" y="160"/><use href="#bow" x="2089" y="160"/><use href="#bow" x="2170" y="160"/><use href="#bow" x="2250" y="160"/></g>
<text x="2031" y="174" textLength="33" lengthAdjust="spacingAndGlyphs">sub</text><text x="2111" y="174" textLength="30" lengthAdjust="spacingAndGlyphs">sub</text><text x="2192" y="174" textLength="33" lengthAdjust="spacingAndGlyphs">sub</text><text x="2272" y="174" textLength="30" lengthAdjust="spacingAndGlyphs">sub</text>

<!-- KICK row -->
<g fill="#5f663c" fill-opacity=".92"><rect x="562" y="253" width="153" height="37"/><rect x="722" y="253" width="80" height="37"/><rect x="883" y="253" width="120" height="37"/><rect x="1043" y="253" width="160" height="37"/><rect x="2005" y="253" width="321" height="37"/><rect x="2487" y="253" width="311" height="37"/></g>
<g fill="url(#tk)"><rect x="562" y="290" width="153" height="6"/><rect x="722" y="290" width="80" height="6"/><rect x="883" y="290" width="120" height="6"/><rect x="1043" y="290" width="160" height="6"/><rect x="2005" y="290" width="321" height="6"/><rect x="2487" y="290" width="311" height="6"/></g>
<g class="kh">
<rect x="562.500" y="225.500" width="79" height="28" rx="3"/><rect x="642.500" y="225.500" width="72" height="28" rx="3"/><rect x="722.500" y="225.500" width="79" height="28" rx="3"/><rect x="883.500" y="225.500" width="79" height="28" rx="3"/><rect x="963.500" y="225.500" width="39" height="28" rx="3"/><rect x="1043.500" y="225.500" width="79" height="28" rx="3"/><rect x="1123.500" y="225.500" width="79" height="28" rx="3"/><rect x="2005.500" y="225.500" width="79" height="28" rx="3"/><rect x="2085.500" y="225.500" width="59" height="28" rx="3"/><rect x="2145.500" y="225.500" width="20" height="28" rx="3"/><rect x="2166.500" y="225.500" width="79" height="28" rx="3"/><rect x="2246.500" y="225.500" width="59" height="28" rx="3"/><rect x="2306.500" y="225.500" width="19" height="28" rx="3"/><rect x="2487.500" y="225.500" width="79" height="28" rx="3"/><rect x="2567.500" y="225.500" width="59" height="28" rx="3"/><rect x="2627.500" y="225.500" width="19" height="28" rx="3"/><rect x="2647.500" y="225.500" width="79" height="28" rx="3"/><rect x="2727.500" y="225.500" width="70" height="28" rx="3"/>
</g>
<g class="ic">
<use href="#pno" x="566" y="230"/><use href="#pno" x="646" y="230"/><use href="#pno" x="726" y="230"/><use href="#pno" x="887" y="230"/><use href="#pno" x="967" y="230"/><use href="#pno" x="1047" y="230"/><use href="#pno" x="1127" y="230"/><use href="#pno" x="2009" y="230"/><use href="#pno" x="2089" y="230"/><use href="#pno" x="2147" y="230"/><use href="#pno" x="2170" y="230"/><use href="#pno" x="2250" y="230"/><use href="#pno" x="2308" y="230"/><use href="#pno" x="2491" y="230"/><use href="#pno" x="2571" y="230"/><use href="#pno" x="2629" y="230"/><use href="#pno" x="2651" y="230"/><use href="#pno" x="2731" y="230"/>
</g>
<text x="588" y="245" textLength="42" lengthAdjust="spacingAndGlyphs">KICK</text><text x="668" y="245" textLength="42" lengthAdjust="spacingAndGlyphs">KICK</text><text x="748" y="245" textLength="42" lengthAdjust="spacingAndGlyphs">KICK</text><text x="909" y="245" textLength="42" lengthAdjust="spacingAndGlyphs">KICK</text><text x="1069" y="245" textLength="42" lengthAdjust="spacingAndGlyphs">KICK</text><text x="1149" y="245" textLength="42" lengthAdjust="spacingAndGlyphs">KICK</text><text x="2031" y="245" textLength="42" lengthAdjust="spacingAndGlyphs">KICK</text><text x="2111" y="245" textLength="25" lengthAdjust="spacingAndGlyphs">K..</text><text x="2192" y="245" textLength="42" lengthAdjust="spacingAndGlyphs">KICK</text><text x="2272" y="245" textLength="25" lengthAdjust="spacingAndGlyphs">K..</text><text x="2513" y="245" textLength="42" lengthAdjust="spacingAndGlyphs">KICK</text><text x="2593" y="245" textLength="25" lengthAdjust="spacingAndGlyphs">K..</text><text x="2673" y="245" textLength="42" lengthAdjust="spacingAndGlyphs">KICK</text><text x="2753" y="245" textLength="42" lengthAdjust="spacingAndGlyphs">KICK</text>

<!-- Track 5 row -->
<g fill="#39414b" fill-opacity=".9"><rect x="803" y="332" width="73" height="42"/><rect x="1845" y="332" width="151" height="42"/><rect x="2406" y="332" width="70" height="42"/></g>
<g fill="#9ca2a7"><rect x="803" y="370" width="73" height="2"/><rect x="1845" y="370" width="151" height="2"/><rect x="2406" y="370" width="70" height="2"/></g>
<g class="th"><rect x="803.500" y="305.500" width="72" height="27" rx="3"/><rect x="1845.500" y="305.500" width="150" height="27" rx="3"/><rect x="2406.500" y="305.500" width="69" height="27" rx="3"/></g>
<g fill="#d8dde0"><use href="#pno" x="807" y="309"/><use href="#pno" x="1849" y="309"/><use href="#pno" x="2410" y="309"/></g>
<text x="830" y="326" textLength="44" lengthAdjust="spacingAndGlyphs" style="fill:#ccd3d7">Pat..0</text><text x="1871" y="326" textLength="103" lengthAdjust="spacingAndGlyphs" style="fill:#ccd3d7">Pattern 21</text><text x="2432" y="326" textLength="38" lengthAdjust="spacingAndGlyphs" style="fill:#ccd3d7">Pa..</text>

<!-- Track 6 row -->
<g fill="url(#t6)"><rect x="1043" y="378" width="160" height="26"/><rect x="1845" y="378" width="151" height="26"/><rect x="2005" y="378" width="140" height="26"/><rect x="2166" y="378" width="149" height="26"/></g>
<g fill="#2f3741" fill-opacity=".9"><rect x="1043" y="404" width="160" height="42"/><rect x="1845" y="404" width="151" height="42"/><rect x="2005" y="404" width="140" height="42"/><rect x="2166" y="404" width="149" height="42"/></g>

<!-- MID BASS rows -->
<g transform="translate(562,448)"><rect width="802" height="29" fill="url(#h20g)"/><rect x="1844.600" width="400.900" height="29" fill="url(#h20g)"/>
<g fill="#3c5c38" fill-opacity=".92"><rect y="29" width="802" height="40"/><rect x="1844.600" y="29" width="400.900" height="40"/></g>
<g fill="url(#f20)"><rect y="30" width="802" height="5"/><rect x="1844.600" y="30" width="400.900" height="5"/></g></g>
<g transform="translate(562,483)" fill="url(#wm1)"><rect width="802" height="33"/><rect x="1844.600" width="400.900" height="33"/></g>
<g transform="translate(562,520)"><rect width="802" height="28" fill="url(#h10g)"/><rect x="1844.600" width="400.900" height="28" fill="url(#h10g)"/>
<g fill="#3c5c38" fill-opacity=".92"><rect y="28" width="802" height="42"/><rect x="1844.600" y="28" width="400.900" height="42"/></g>
<g fill="url(#f10)"><rect y="29" width="802" height="5"/><rect x="1844.600" y="29" width="400.900" height="5"/></g></g>
<g transform="translate(562,559)" fill="url(#wm2)"><rect width="802" height="21"/><rect x="1844.600" width="400.900" height="21"/></g>
<g transform="translate(562,592)"><rect width="802" height="29" fill="url(#h20g)"/><rect x="1844.600" width="400.900" height="29" fill="url(#h20g)"/>
<g fill="#3c5c38" fill-opacity=".92"><rect y="29" width="802" height="41"/><rect x="1844.600" y="29" width="400.900" height="41"/></g>
<g fill="url(#f20)"><rect y="30" width="802" height="5"/><rect x="1844.600" y="30" width="400.900" height="5"/></g></g>
<g transform="translate(562,635)" fill="url(#wm3)"><rect width="802" height="15"/><rect x="1844.600" width="400.900" height="15"/></g>

<!-- MID BASS 4 clips -->
<g class="gh"><rect x="1925.500" y="712.500" width="79" height="30" rx="3"/><rect x="2005.500" y="712.500" width="79" height="30" rx="3"/><rect x="2085.500" y="712.500" width="79" height="30" rx="3"/><rect x="2165.500" y="712.500" width="79" height="30" rx="3"/><rect x="2246.500" y="712.500" width="79" height="30" rx="3"/></g>
<g class="bw"><use href="#bow" x="1929" y="722"/><use href="#bow" x="2009" y="722"/><use href="#bow" x="2089" y="722"/><use href="#bow" x="2169" y="722"/><use href="#bow" x="2250" y="722"/></g>
<text x="1952" y="734" textLength="49" lengthAdjust="spacingAndGlyphs">MI..4</text><text x="2032" y="734" textLength="49" lengthAdjust="spacingAndGlyphs">MI..4</text><text x="2112" y="734" textLength="49" lengthAdjust="spacingAndGlyphs">MI..4</text><text x="2192" y="734" textLength="49" lengthAdjust="spacingAndGlyphs">MI..4</text><text x="2273" y="734" textLength="49" lengthAdjust="spacingAndGlyphs">MI..4</text>

<!-- ACID -->
<g fill="#2c4f68" fill-opacity=".92"><rect x="562" y="813" width="802" height="42"/><rect x="2326.400" y="813" width="480" height="42"/></g>
<g fill="url(#wac)"><rect x="562" y="829" width="802" height="10"/><rect x="2326.400" y="829" width="480" height="10"/></g>
<g class="bh"><rect x="562.500" y="784.500" width="159" height="28" rx="3"/><rect x="722.500" y="784.500" width="160" height="28" rx="3"/><rect x="883.500" y="784.500" width="159" height="28" rx="3"/><rect x="1043.500" y="784.500" width="160" height="28" rx="3"/><rect x="1204.500" y="784.500" width="159" height="28" rx="3"/><rect x="2326.500" y="784.500" width="160" height="28" rx="3"/><rect x="2487.500" y="784.500" width="159" height="28" rx="3"/><rect x="2647.500" y="784.500" width="159" height="28" rx="3"/></g>
<g fill="#e0a35c"><path d="M562 813h5l-5 6z"/><path d="M722 813h5l-5 6z"/><path d="M883 813h5l-5 6z"/><path d="M1043 813h5l-5 6z"/><path d="M1204 813h5l-5 6z"/><path d="M2326 813h5l-5 6z"/><path d="M2487 813h5l-5 6z"/><path d="M2647 813h5l-5 6z"/></g>
<g fill="#dcecf6"><use href="#bow" x="566" y="791"/><use href="#bow" x="726" y="791"/><use href="#bow" x="887" y="791"/><use href="#bow" x="1047" y="791"/><use href="#bow" x="1208" y="791"/><use href="#bow" x="2330" y="791"/><use href="#bow" x="2491" y="791"/><use href="#bow" x="2651" y="791"/></g>
<text x="588" y="805" textLength="86" lengthAdjust="spacingAndGlyphs">ACID SEQ</text><text x="748" y="805" textLength="86" lengthAdjust="spacingAndGlyphs">ACID SEQ</text><text x="909" y="805" textLength="86" lengthAdjust="spacingAndGlyphs">ACID SEQ</text><text x="1069" y="805" textLength="86" lengthAdjust="spacingAndGlyphs">ACID SEQ</text><text x="1230" y="805" textLength="86" lengthAdjust="spacingAndGlyphs">ACID SEQ</text><text x="2352" y="805" textLength="86" lengthAdjust="spacingAndGlyphs">ACID SEQ</text><text x="2513" y="805" textLength="86" lengthAdjust="spacingAndGlyphs">ACID SEQ</text><text x="2673" y="805" textLength="86" lengthAdjust="spacingAndGlyphs">ACID SEQ</text>

<!-- DRIVE -->
<rect x="2326" y="908" width="320" height="42" fill="#2f5068" fill-opacity=".92"/>
<rect x="2326" y="923" width="320" height="3" fill="#a9e0ee"/>
<g class="dh"><rect x="2326.500" y="880.500" width="79" height="28" rx="3"/><rect x="2406.500" y="880.500" width="79" height="28" rx="3"/><rect x="2486.500" y="880.500" width="79" height="28" rx="3"/><rect x="2566.500" y="880.500" width="79" height="28" rx="3"/></g>
<g class="ic"><use href="#pno" x="2330" y="885"/><use href="#pno" x="2410" y="885"/><use href="#pno" x="2490" y="885"/><use href="#pno" x="2570" y="885"/></g>
<text x="2352" y="901" textLength="51" lengthAdjust="spacingAndGlyphs">DR..Q</text><text x="2432" y="901" textLength="51" lengthAdjust="spacingAndGlyphs">DR..Q</text><text x="2512" y="901" textLength="51" lengthAdjust="spacingAndGlyphs">DR..Q</text><text x="2592" y="901" textLength="51" lengthAdjust="spacingAndGlyphs">DR..Q</text>

<!-- DRUM LOOP 3 -->
<g transform="translate(562,968)"><rect x="320.800" width="481.200" height="29" fill="url(#h20d)"/><rect x="1363.400" width="69" height="29" fill="url(#h20d)"/><rect x="1443.600" width="641.600" height="29" fill="url(#h20d)"/></g>
<g transform="translate(562,999)" fill="url(#wd3)"><rect x="320.800" width="481.200" height="40"/><rect x="1363.400" width="69" height="40"/><rect x="1443.600" width="641.600" height="40"/></g>
<!-- DRUM LOOP 1 -->
<g transform="translate(562,1040)"><rect x="160.400" width="641.600" height="29" fill="url(#h40d)"/><rect x="1363.400" width="69" height="29" fill="url(#h40d)"/><rect x="1443.600" width="641.600" height="29" fill="url(#h40d)"/></g>
<g transform="translate(562,1069)" fill="url(#bd1)"><rect x="160.400" width="641.600" height="42"/><rect x="1363.400" width="69" height="42"/><rect x="1443.600" width="641.600" height="42"/></g>
<!-- DRUM LOOP 2 -->
<g transform="translate(562,1112)"><rect width="802" height="29" fill="url(#h40d)"/><rect x="1363.400" width="69" height="29" fill="url(#h40d)"/><rect x="1443.600" width="641.600" height="29" fill="url(#h40d)"/></g>
<g fill="#5b403b" fill-opacity=".94"><rect x="562" y="1141" width="802" height="36"/><rect x="1925.400" y="1141" width="69" height="36"/><rect x="2005.600" y="1141" width="641.600" height="36"/></g>
<g fill="url(#td)"><rect x="562" y="1177" width="802" height="6"/><rect x="1925.400" y="1177" width="69" height="6"/><rect x="2005.600" y="1177" width="641.600" height="6"/></g>

<!-- snare row -->
<use href="#sn" x="1173"/><use href="#sn" x="2134"/><use href="#sn" x="2295"/><use href="#sn" x="2616"/>

<!-- REAL GUITAR -->
<rect x="1365" y="1349" width="159" height="41" fill="#5a3137" fill-opacity=".92"/>
<g transform="translate(1365,1365)"><rect width="159" height="11" fill="url(#wrg)"/></g>
<g class="rh"><rect x="1365.500" y="1320.500" width="78" height="28" rx="3"/><rect x="1444.500" y="1320.500" width="19" height="28" rx="3"/><rect x="1464.500" y="1320.500" width="19" height="28" rx="3"/><rect x="1484.500" y="1320.500" width="19" height="28" rx="3"/><rect x="1504.500" y="1320.500" width="19" height="28" rx="3"/></g>
<g fill="#f1d7d4"><use href="#bow" x="1368" y="1328"/><use href="#bow" x="1447" y="1328"/><use href="#bow" x="1467" y="1328"/><use href="#bow" x="1487" y="1328"/><use href="#bow" x="1507" y="1328"/></g>
<text x="1390" y="1342" textLength="52" lengthAdjust="spacingAndGlyphs">R..AR</text>
<g fill="#e0a35c"><path d="M1365 1349h5l-5 6z"/><path d="M1444 1349h5l-5 6z"/></g>

<!-- RYNN -->
<g fill="#5c3a3f" fill-opacity=".92"><rect x="875" y="1421" width="20" height="35"/><rect x="1035" y="1421" width="20" height="35"/><rect x="1524" y="1421" width="64" height="35"/><rect x="1601" y="1421" width="74" height="35"/><rect x="1925" y="1421" width="71" height="35"/></g>
<g fill="#f0a7a8">
<use href="#voc" transform="translate(875) scale(.31,1)"/>
<use href="#voc" transform="translate(1035) scale(.31,1)"/>
<use href="#voc" transform="translate(1524)"/>
<use href="#voc" transform="translate(1601) scale(1.156,1)"/>
<use href="#voc" transform="translate(1925) scale(1.11,1)"/>
</g>
<g class="rh"><rect x="875.500" y="1392.500" width="19" height="28" rx="3"/><rect x="1035.500" y="1392.500" width="19" height="28" rx="3"/><rect x="1524.500" y="1392.500" width="63" height="28" rx="3"/><rect x="1601.500" y="1392.500" width="52" height="28" rx="3"/><rect x="1654.500" y="1392.500" width="20" height="28" rx="3"/><rect x="1925.500" y="1392.500" width="70" height="28" rx="3"/></g>
<g fill="#f1d7d4"><use href="#bow" x="878" y="1400"/><use href="#bow" x="1038" y="1400"/><use href="#bow" x="1528" y="1400"/><use href="#bow" x="1605" y="1400"/><use href="#bow" x="1658" y="1400"/><use href="#bow" x="1929" y="1400"/></g>
<text x="1551" y="1414" textLength="34" lengthAdjust="spacingAndGlyphs">RY..</text><text x="1627" y="1414" textLength="25" lengthAdjust="spacingAndGlyphs" style="fill:#c9a6a8">R..</text><text x="1952" y="1414" textLength="38" lengthAdjust="spacingAndGlyphs">RY..</text>
</g>
</svg>
</body></html>
